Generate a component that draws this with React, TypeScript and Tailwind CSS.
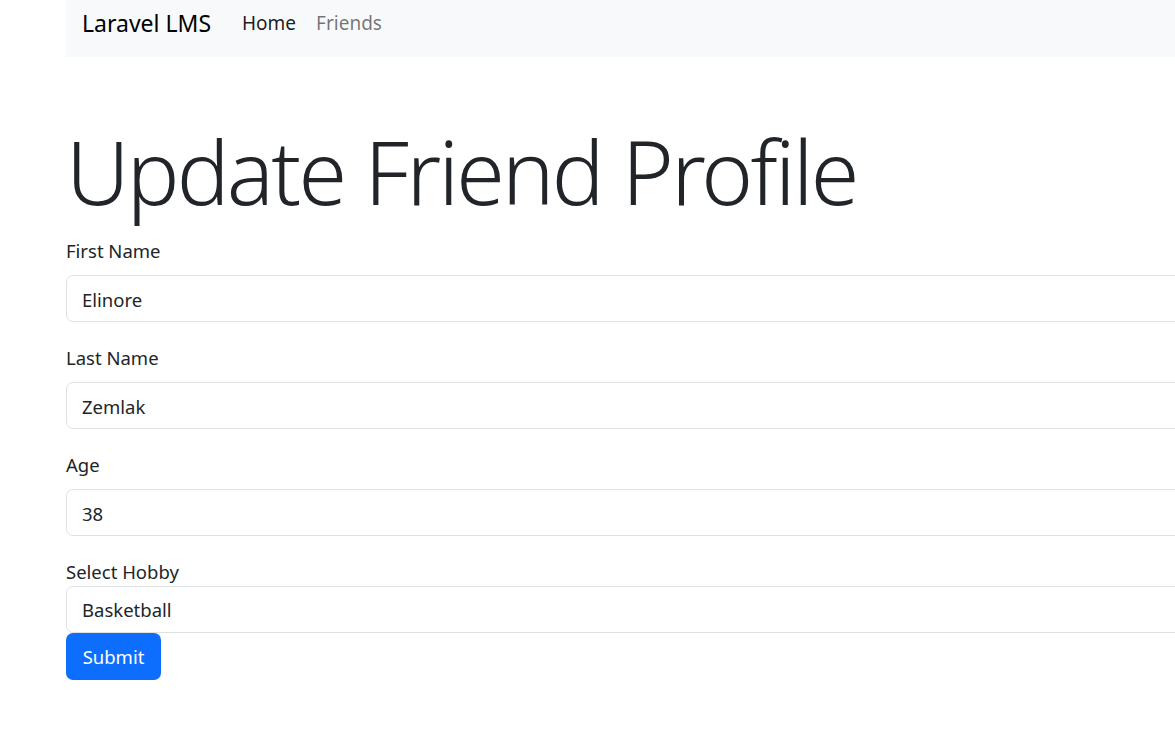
import React from 'react';

const fields = [
  { label: 'First Name', value: 'Elinore' },
  { label: 'Last Name', value: 'Zemlak' },
  { label: 'Age', value: '38' },
];

export default function App() {
  return (
    <div className="min-h-screen w-full overflow-hidden bg-white text-[#212529] font-['Noto_Sans',sans-serif]">
      <div className="pl-[66px]">
        <div className="w-[1140px]">
          {/* Navbar */}
          <nav className="flex h-[57px] items-start bg-[#f8f9fa] pl-[16px] pt-[6px]">
            <a className="mr-[31px] text-[23px] leading-[34px] text-black">Laravel LMS</a>
            <ul className="flex gap-[20px] text-[19px] leading-[34px]">
              <li className="text-black/90">Home</li>
              <li className="text-black/55">Friends</li>
            </ul>
          </nav>

          {/* Content */}
          <div className="mt-[62px]">
            <h1 className="mb-[10px] text-[88px] font-light leading-[1.2] tracking-[-2.7px]">Update Friend Profile</h1>
            <form>
              {fields.map((f) => (
                <div key={f.label} className="mb-[20px]">
                  <label className="mb-[10px] block pt-[1px] text-[18.5px] leading-[29px]">{f.label}</label>
                  <input
                    defaultValue={f.value}
                    className="block h-[47px] w-full rounded-[7px] border border-[#dee2e6] px-[15px] pt-[2px] text-[18.5px] text-[#212529] outline-none"
                  />
                </div>
              ))}
              <label className="block pt-[1px] text-[18.5px] leading-[29px]">Select Hobby</label>
              <div className="flex h-[47px] w-full items-center rounded-[7px] border border-[#dee2e6] px-[15px] pt-[2px] text-[18.5px]">
                Basketball
              </div>
              <button
                type="button"
                className="h-[47px] w-[95px] rounded-[7px] bg-[#0d6efd] pt-[2px] text-[18.5px] text-white"
              >
                Submit
              </button>
            </form>
          </div>
        </div>
      </div>
    </div>
  );
}
